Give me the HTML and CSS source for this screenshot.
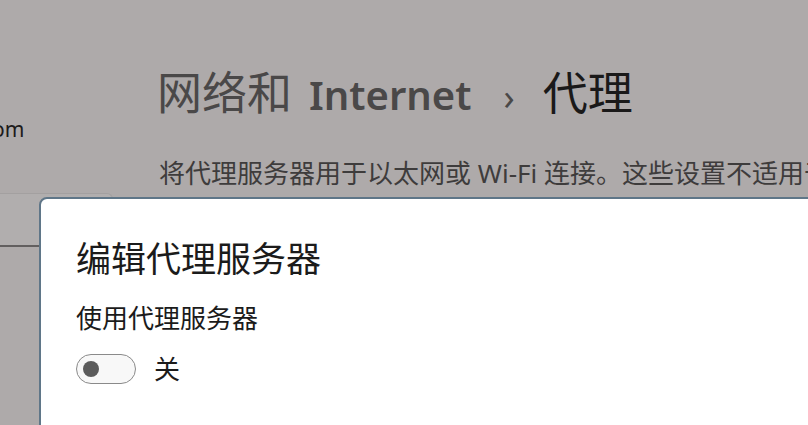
FILE: index.html
```html
<!DOCTYPE html>
<html lang="zh-CN">
<head>
    <meta charset="UTF-8">
    <meta name="viewport" content="width=device-width, initial-scale=1.0">
    <title>代理</title>
    <link rel="stylesheet" href="styles.css">
</head>
<body>
    <div class="nav">
        <div class="account">om</div>
        <div class="search"></div>
    </div>

    <main class="main">
        <h1 class="page-title">
            <span class="crumb">网络和<span class="latin">Internet</span></span>
            <span class="chevron">›</span>
            <span class="current">代理</span>
        </h1>
        <p class="subtitle">将代理服务器用于以太网或 Wi-Fi 连接。这些设置不适用于 VPN 连接。</p>
    </main>

    <div class="dialog">
        <h2 class="dialog-title">编辑代理服务器</h2>
        <div class="field-label">使用代理服务器</div>
        <div class="toggle-row">
            <div class="toggle"><span class="knob"></span></div>
            <span class="toggle-text">关</span>
        </div>
    </div>
</body>
</html>
```

FILE: styles.css
```css
body {
    font-family: "Noto Sans", "Noto Sans CJK SC", sans-serif;
    margin: 0;
    padding: 0;
    width: 808px;
    height: 425px;
    overflow: hidden;
    display: flex;
    background-color: #aeaaaa;
    color: #1b1b1b;
}
.nav {
    width: 113px;
    flex-shrink: 0;
    padding-top: 113px;
    overflow: hidden;
}
.account {
    font-size: 21px;
    line-height: 32px;
    margin-left: -8px;
    color: #1c1b1b;
}
.search {
    margin-top: 48px;
    height: 51px;
    background-color: #b1aeae;
    border-top: 1px solid #a3a0a0;
    border-right: 1px solid #a3a0a0;
    border-bottom: 2px solid #625f5f;
    border-radius: 0 6px 6px 0;
}
.main {
    margin-left: 44px;
    padding-top: 63px;
    white-space: nowrap;
}
.page-title {
    margin: 0;
    font-size: 45px;
    line-height: 60px;
    font-weight: normal;
    display: flex;
    align-items: baseline;
}
.crumb {
    color: #4a4848;
}
.latin {
    font-size: 40px;
    font-weight: 600;
    margin-left: 17px;
}
.chevron {
    font-size: 36px;
    color: #4a4848;
    margin: 0 28px 0 32px;
}
.current {
    color: #1a1919;
}
.subtitle {
    margin: 29px 0 0 2px;
    font-size: 26px;
    line-height: 34px;
    color: #3e3c3c;
}
.dialog {
    position: absolute;
    left: 39px;
    top: 197px;
    width: 800px;
    height: 260px;
    background: white;
    border: 2px solid #5f7688;
    border-radius: 8px;
    padding: 38px 35px 0;
    box-sizing: border-box;
}
.dialog-title {
    margin: 0;
    font-size: 35px;
    line-height: 44px;
    font-weight: normal;
}
.field-label {
    margin-top: 20px;
    font-size: 26px;
    line-height: 34px;
}
.toggle-row {
    margin-top: 19px;
    display: flex;
    align-items: center;
}
.toggle {
    width: 60px;
    height: 30px;
    box-sizing: border-box;
    border: 1.5px solid #8a8a8a;
    border-radius: 15px;
    background-color: #f8f8f8;
    display: flex;
    align-items: center;
    padding-left: 6px;
}
.knob {
    width: 16px;
    height: 16px;
    border-radius: 50%;
    background-color: #5c5c5c;
}
.toggle-text {
    margin-left: 18px;
    font-size: 26px;
    line-height: 30px;
}
```
